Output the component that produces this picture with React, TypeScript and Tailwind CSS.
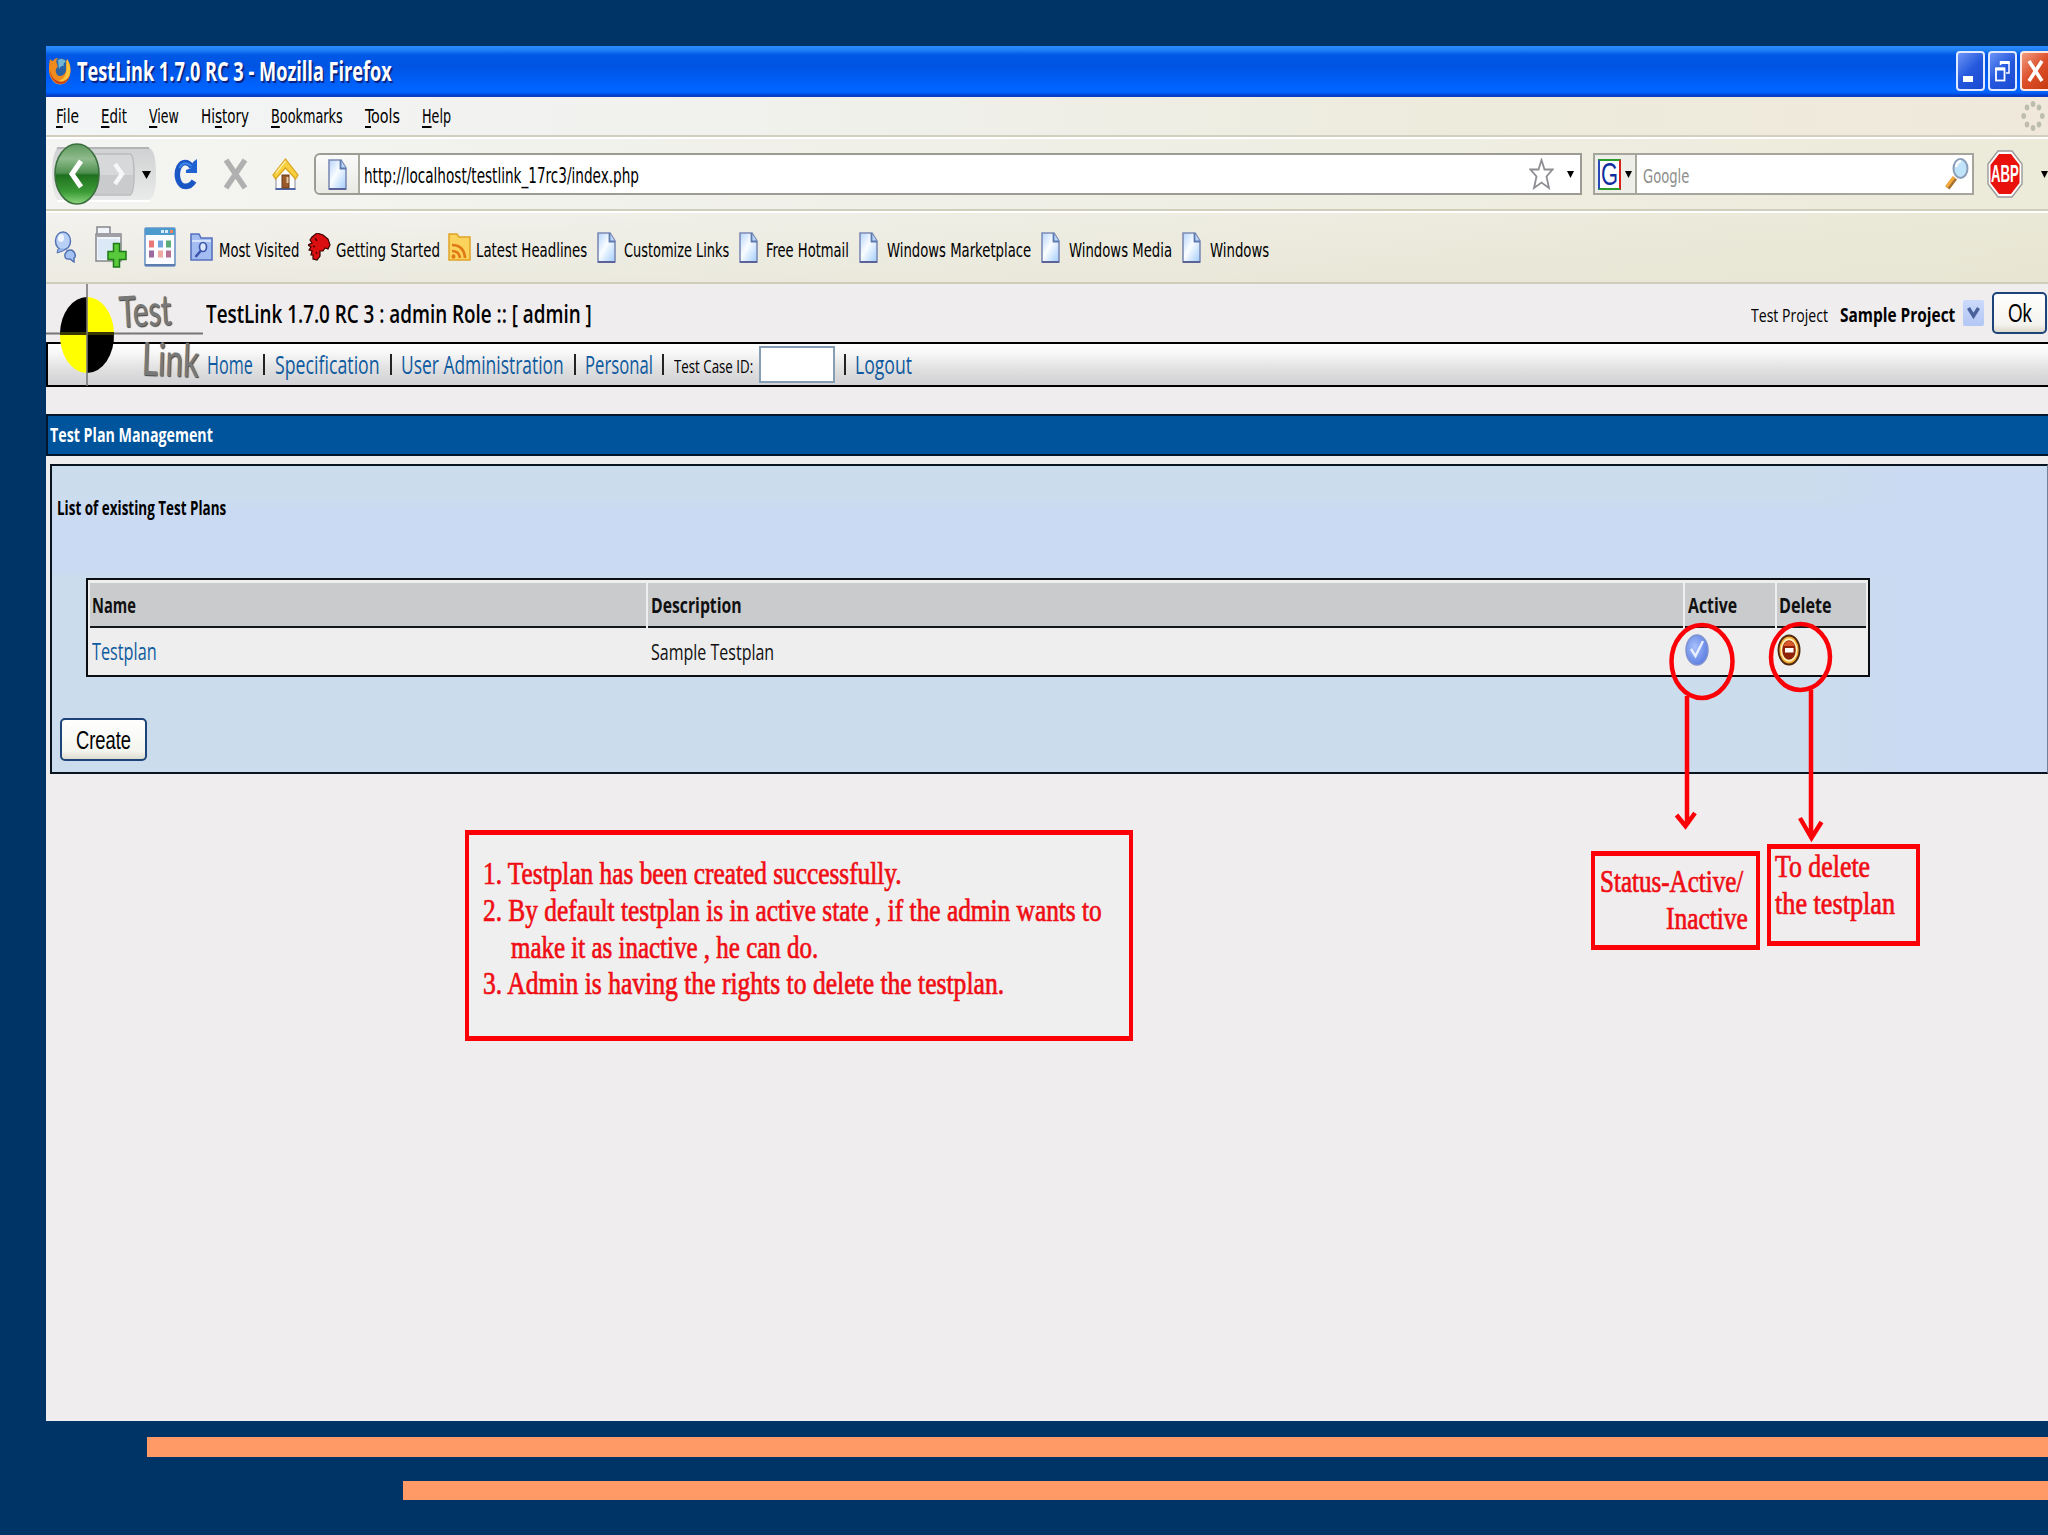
import { useLayoutEffect, useRef, useState } from "react";
import type { ReactNode } from "react";

type FitProps = { w: number; className?: string; children: ReactNode };

// One line of text squeezed or stretched to a fixed width
function Fit({ w, className = "", children }: FitProps) {
  const ref = useRef<HTMLSpanElement>(null);
  const [scale, setScale] = useState(1);

  useLayoutEffect(() => {
    const natural = ref.current?.offsetWidth;
    if (natural) setScale(w / natural);
  }, [w]);

  return (
    <span className={`block shrink-0 whitespace-pre ${className}`} style={{ width: w }}>
      <span ref={ref} className="block w-max origin-left" style={{ transform: `scaleX(${scale})` }}>
        {children}
      </span>
    </span>
  );
}

const UI = "font-['DejaVu_Sans_Condensed','DejaVu_Sans',sans-serif]";
const WEB = "font-['Open_Sans',sans-serif]";

const menu = [
  { pre: "", key: "F", post: "ile", w: 23 },
  { pre: "", key: "E", post: "dit", w: 26 },
  { pre: "", key: "V", post: "iew", w: 30 },
  { pre: "Hi", key: "s", post: "tory", w: 48 },
  { pre: "", key: "B", post: "ookmarks", w: 72 },
  { pre: "", key: "T", post: "ools", w: 35 },
  { pre: "", key: "H", post: "elp", w: 29 },
];

const pageLinks = [
  { label: "Customize Links", w: 105, gap: "ml-[8px]" },
  { label: "Free Hotmail", w: 83, gap: "ml-[8px]" },
  { label: "Windows Marketplace", w: 144, gap: "ml-[9px]" },
  { label: "Windows Media", w: 103, gap: "ml-[9px]" },
  { label: "Windows", w: 59, gap: "ml-[9px]" },
];

function FirefoxIcon() {
  return (
    <svg className="ml-[3px] h-[30px] w-[22px] shrink-0" viewBox="0 0 22 30" preserveAspectRatio="none">
      <ellipse cx="12" cy="14" rx="8.5" ry="12" fill="#2a62a8" />
      <path d="M9 4c3-2 7-1 8 2-2 0-3 2-2 4-2-1-4 1-5 3z" fill="#6fb6d8" />
      <path d="M1 3c1 1 2 2 3 2C6 2 8 2 9 2 7 4 7 6 8 8c1 2 1 3-1 5-1 3 1 7 4 7 4 0 7-4 6-10 0-3 0-5 1-7 5 6 5 17-1 23-5 4-12 2-15-4C-1 17 0 8 1 3z" fill="#f08a1c" />
      <path d="M18 3c5 7 4 19-2 24-5 3-11 1-13-4 6 4 12 1 14-6 1-5 0-9 1-14z" fill="#fbc23c" />
      <path d="M1 14c0 8 5 15 11 14 5 0 8-5 9-9-3 6-8 8-12 6-4-1-7-5-8-11z" fill="#c8401a" />
    </svg>
  );
}

function PageIcon({ className = "" }: { className?: string }) {
  return (
    <svg className={`h-[31px] w-[19px] shrink-0 ${className}`} viewBox="0 0 19 31">
      <defs>
        <linearGradient id="page" x1="0" y1="0" x2="1" y2="1">
          <stop offset="0" stopColor="#b4d3fb" />
          <stop offset="0.45" stopColor="#fafdff" />
          <stop offset="1" stopColor="#a0cbfb" />
        </linearGradient>
      </defs>
      <path d="M1 1H13L18 9V30H1Z" fill="url(#page)" stroke="#7d8bb5" strokeWidth="1.6" />
      <path d="M12.5 1V9.5H18" fill="#b9d6fb" stroke="#5d79ae" strokeWidth="1.8" />
      <path d="M1 30H18" stroke="#5a6298" strokeWidth="2" />
    </svg>
  );
}

function Caret({ className = "" }: { className?: string }) {
  return (
    <svg className={`h-[7px] w-[7px] shrink-0 ${className}`} viewBox="0 0 8 7" preserveAspectRatio="none">
      <path d="M0 0h8L4 7z" fill="#000" />
    </svg>
  );
}

function BackForward() {
  return (
    <svg className="ml-[5px] h-[64px] w-[108px] shrink-0" viewBox="0 0 108 64">
      <defs>
        <linearGradient id="green" x1="0" y1="0" x2="0" y2="1">
          <stop offset="0" stopColor="#5f9a5f" />
          <stop offset="0.25" stopColor="#8fbb8c" />
          <stop offset="0.48" stopColor="#4f9150" />
          <stop offset="0.52" stopColor="#1f701f" />
          <stop offset="0.8" stopColor="#3b9c36" />
          <stop offset="1" stopColor="#8fd67f" />
        </linearGradient>
        <linearGradient id="pill" x1="0" y1="0" x2="0" y2="1">
          <stop offset="0" stopColor="#cfd1d2" />
          <stop offset="1" stopColor="#e9ebeb" />
        </linearGradient>
      </defs>
      <path d="M6 6H98Q105 8 105 32T98 58H6Q1 50 1 32T6 6Z" fill="url(#pill)" />
      <path d="M6 6H98" stroke="#b3b4b5" strokeWidth="2" />
      <path d="M6 59H99" stroke="#fff" strokeWidth="2" />
      <path d="M44 12H79Q83 13 83 32T79 53H44Z" fill="#d6d8d9" stroke="#b9bbbd" strokeWidth="1.5" />
      <path d="M45 33H82Q82 52 79 52H45Z" fill="#c9cbcd" />
      <path d="M64 22L71 32L64 42" fill="none" stroke="#f7f7f7" strokeWidth="4.5" />
      <ellipse cx="26" cy="32" rx="22" ry="30" fill="url(#green)" stroke="#3b6f3e" strokeWidth="1.6" />
      <path d="M30 19L21 32L30 45" fill="none" stroke="#fff" strokeWidth="5" />
      <path d="M91 29h9l-4.5 8z" fill="#000" />
    </svg>
  );
}

function ReloadIcon() {
  return (
    <svg className="ml-[15px] h-[32px] w-[24px] shrink-0" viewBox="0 0 24 32">
      <path d="M18 9C14 3 8 3 5 9C2 15 3 25 9 28C13 29 17 28 20 23" fill="none" stroke="#1b57c4" strokeWidth="5.5" />
      <path d="M17.5 8C13 4 8 4 5.500 10" fill="none" stroke="#3f86ea" strokeWidth="2" />
      <path d="M23 1V15H12V12L17 10L19 4Z" fill="#1e62d2" />
    </svg>
  );
}

function HomeIcon() {
  return (
    <svg className="ml-[24px] h-[32px] w-[27px] shrink-0" viewBox="0 0 27 32">
      <path d="M4 14L13.5 5L23 14V31H4Z" fill="#fbfcfd" stroke="#9c9da8" strokeWidth="1.2" />
      <path d="M3.5 31H23.5" stroke="#5064a8" strokeWidth="2" />
      <rect x="10" y="17" width="7" height="13" fill="#9a5a2c" stroke="#6d3c18" />
      <rect x="14.5" y="19" width="2" height="6" fill="#e6c8a0" />
      <path d="M13.5 1L26 17L23.5 21L13.5 10L3.500 21L1 17Z" fill="#f8cf3d" stroke="#d9a21c" strokeWidth="1.2" />
      <path d="M13.5 3L4 15" stroke="#fdeb9a" strokeWidth="1.5" />
    </svg>
  );
}

function Magnifier() {
  return (
    <svg className="mr-[3px] ml-auto h-[32px] w-[24px]" viewBox="0 0 24 32">
      <path d="M10 20L2.5 30" stroke="#a8702c" strokeWidth="5" />
      <path d="M9 19L1.5 29" stroke="#f2a83a" strokeWidth="3" />
      <ellipse cx="15.5" cy="10.5" rx="7" ry="9.5" fill="#bfe3f8" stroke="#8a9eb8" strokeWidth="2" />
      <path d="M11 9Q12 3.500 16 3" fill="none" stroke="#fff" strokeWidth="2.5" />
    </svg>
  );
}

function AdblockIcon() {
  return (
    <div className="relative ml-[13px] h-[48px] w-[36px] shrink-0">
      <svg className="h-[48px] w-[36px]" viewBox="0 0 36 48">
        <path d="M11 1H25L35 14V34L25 47H11L1 34V14Z" fill="#fff" stroke="#9b9b9b" strokeWidth="1.4" />
        <path d="M12 4H24L32.5 15V33L24 44H12L3.500 33V15Z" fill="#e8110c" />
      </svg>
      <Fit w={28} className="absolute top-[9px] left-[4px] font-['Liberation_Sans',sans-serif] text-[24px] leading-[30px] font-bold text-white">
        ABP
      </Fit>
    </div>
  );
}

function TitleBar() {
  return (
    <div className="flex h-[51px] items-center border-b-2 border-[#0a3fc4] bg-[linear-gradient(180deg,#2b8cff_0px,#2080f5_4px,#0058e6_9px,#0054e3_20px,#0061fb_38px,#0066ff_46px,#0045d8_49px)]">
      <FirefoxIcon />
      <Fit w={315} className={`ml-[6px] ${WEB} text-[26px] leading-[30px] font-bold text-white [text-shadow:2px_2px_1px_#0a1f7a]`}>
        TestLink 1.7.0 RC 3 - Mozilla Firefox
      </Fit>
      <div className="ml-auto flex shrink-0 gap-[3px]">
        <div className="flex h-[40px] w-[29px] items-end rounded-[4px] border-2 border-[#dfe9ff] bg-[linear-gradient(135deg,#6d94f6,#2458dd_50%,#1c4ad0)] pb-[7px] pl-[5px]">
          <div className="h-[6px] w-[10px] bg-white" />
        </div>
        <div className="flex h-[40px] w-[29px] items-center justify-center rounded-[4px] border-2 border-[#dfe9ff] bg-[linear-gradient(135deg,#6d94f6,#2458dd_50%,#1c4ad0)]">
          <svg className="h-[22px] w-[15px]" viewBox="0 0 15 22">
            <path d="M5.5 5V2H14V13H11" fill="none" stroke="#fff" strokeWidth="1.5" />
            <path d="M5 2.500H14.5" stroke="#fff" strokeWidth="3" />
            <rect x="1" y="8.5" width="8.5" height="12" fill="none" stroke="#fff" strokeWidth="1.8" />
            <path d="M0.5 9H10" stroke="#fff" strokeWidth="3" />
          </svg>
        </div>
        <div className="flex h-[40px] w-[28px] items-center justify-center rounded-l-[4px] border-2 border-r-0 border-[#ffe6df] bg-[linear-gradient(135deg,#f19a80,#dc4f2a_50%,#c63a12)]">
          <svg className="h-[24px] w-[17px]" viewBox="0 0 17 24">
            <path d="M2 2L15 22M15 2L2 22" stroke="#fff" strokeWidth="3.6" />
          </svg>
        </div>
      </div>
    </div>
  );
}

function MenuBar() {
  return (
    <div className="flex h-[40px] items-center gap-[22px] border-b-2 border-[#d2cfbf] bg-[linear-gradient(90deg,#f3f5f6,#f0f0ea_45%,#ecebdc_70%,#f0e9db)] pl-[10px]">
      {menu.map((m) => (
        <Fit key={m.key + m.post} w={m.w} className={`${UI} text-[20px] leading-[30px] text-black`}>
          {m.pre}
          <span className="underline decoration-[2px] underline-offset-[3px] [text-decoration-skip-ink:none]">{m.key}</span>
          {m.post}
        </Fit>
      ))}
      <svg className="mr-[3px] ml-auto h-[32px] w-[24px]" viewBox="0 0 24 32">
        <g fill="#bcbdae">
          <ellipse cx="12" cy="4" rx="2.3" ry="3" />
          <ellipse cx="18" cy="7.5" rx="2.3" ry="3" />
          <ellipse cx="21.3" cy="16" rx="2.3" ry="3" />
          <ellipse cx="18" cy="24.5" rx="2.3" ry="3" />
          <ellipse cx="12" cy="28" rx="2.3" ry="3" />
          <ellipse cx="6" cy="24.5" rx="2.3" ry="3" />
          <ellipse cx="2.7" cy="16" rx="2.3" ry="3" />
          <ellipse cx="6" cy="7.5" rx="2.3" ry="3" />
        </g>
      </svg>
    </div>
  );
}

function NavBar() {
  return (
    <div className="flex h-[74px] items-center border-t-2 border-b-2 border-t-white border-b-[#d0cdbb] bg-[linear-gradient(90deg,#f4f4f2,#f0f0e8_45%,#ecead9)]">
      <BackForward />
      <ReloadIcon />
      <svg className="ml-[25px] h-[32px] w-[25px] shrink-0" viewBox="0 0 25 32">
        <path d="M3 2L22 30M22 2L3 30" stroke="#b0b0b0" strokeWidth="5.5" />
      </svg>
      <HomeIcon />
      <div className="ml-[15px] flex h-[42px] w-[1268px] shrink-0 items-center rounded-l-[6px] border-2 border-[#9c9c94] bg-white">
        <div className="flex h-full w-[44px] shrink-0 items-center rounded-l-[5px] border-r-2 border-[#a9a9a0] bg-[linear-gradient(180deg,#fafafa,#e9e9e4)] pl-[12px]">
          <PageIcon />
        </div>
        <Fit w={275} className={`ml-[4px] pt-[3px] ${UI} text-[21px] leading-[30px] text-black`}>
          http://localhost/testlink_17rc3/index.php
        </Fit>
        <svg className="ml-auto h-[32px] w-[25px]" viewBox="0 0 25 32">
          <path d="M12.5 2L15.5 11.500H23.5L17.5 18.500L20 30L12.5 24.500L5 30L7.500 18.500L1.500 11.500H9.500Z" fill="#fff" stroke="#8e8e94" strokeWidth="1.8" />
        </svg>
        <Caret className="mr-[6px] ml-[13px]" />
      </div>
      <div className="ml-[11px] flex h-[42px] w-[381px] shrink-0 items-center border-2 border-[#a5a59c] bg-white">
        <div className="flex h-full w-[42px] shrink-0 items-center border-r-2 border-[#a9a9a0] bg-[#eeeee8] pl-[3px]">
          <div className="h-[31px] w-[23px] border-2 border-t-[#2c9c2c] border-r-[#d8231c] border-b-[#2c9c2c] border-l-[#2848b8] bg-white">
            <Fit w={17} className="ml-px font-['Liberation_Sans',sans-serif] text-[31px] leading-[28px] text-[#122f9e]">G</Fit>
          </div>
          <Caret className="ml-[4px]" />
        </div>
        <Fit w={46} className={`ml-[6px] pt-[3px] ${UI} text-[20px] leading-[30px] text-[#8d8d8a]`}>Google</Fit>
        <Magnifier />
      </div>
      <AdblockIcon />
      <Caret className="ml-auto" />
    </div>
  );
}

function BookmarksBar() {
  return (
    <div className="flex h-[73px] items-center border-t-2 border-b-2 border-t-white border-b-[#cfccb9] bg-[linear-gradient(180deg,#f3f2ea00,#e2e0cc66),linear-gradient(90deg,#f3f2ef,#efeee5_45%,#eae8d6)] pb-px pl-[8px]">
      <svg className="h-[32px] w-[23px] shrink-0" viewBox="0 0 23 32">
        <ellipse cx="9" cy="10" rx="7.5" ry="9" fill="#b8d0f6" stroke="#5573b4" strokeWidth="1.5" />
        <ellipse cx="7" cy="7" rx="3" ry="4" fill="#eef5ff" />
        <path d="M4 18L3 22L9 20L13 17" fill="#8fb0e6" stroke="#5573b4" />
        <path d="M13 20Q19 17 21 23Q22 26 20 27V31L16 28Q10 29 11 23Z" fill="#a4c3f3" stroke="#4e6db0" strokeWidth="1.4" />
      </svg>
      <svg className="ml-[18px] h-[42px] w-[32px] shrink-0" viewBox="0 0 32 42">
        <path d="M2 8V1H15V8H26V35H1V8Z" fill="#f0f5fa" stroke="#85878c" strokeWidth="1.5" />
        <path d="M2 9H26" stroke="#a0a0a4" strokeWidth="4" />
        <rect x="3" y="13" width="21" height="20" fill="#dbe9f7" />
        <path d="M18.5 17.500H24.5V25.500H31V33.500H24.5V41H18.5V33.500H13V25.500H18.5Z" fill="#58c93a" stroke="#1d7a16" strokeWidth="1.5" />
      </svg>
      <svg className="ml-[17px] h-[40px] w-[32px] shrink-0" viewBox="0 0 32 40">
        <rect x="1" y="1" width="30" height="38" rx="1" fill="#fbfcff" stroke="#6d95c8" strokeWidth="1.6" />
        <rect x="1" y="1" width="30" height="7" fill="#4d9ace" />
        <path d="M17 4.500h3M21 4.500h3" stroke="#d7ebfa" strokeWidth="3" />
        <path d="M26 4.500h3" stroke="#f0825a" strokeWidth="3" />
        <path d="M5 17h5" stroke="#e87878" strokeWidth="7" />
        <path d="M14 17h5" stroke="#74a3dc" strokeWidth="7" />
        <path d="M22 17h5" stroke="#5cab78" strokeWidth="7" />
        <path d="M5 27h5" stroke="#9a6a9e" strokeWidth="7" />
        <path d="M14 27h5" stroke="#eeaaa0" strokeWidth="7" />
        <path d="M22 27h5" stroke="#b57092" strokeWidth="7" />
        <path d="M1 38h30" stroke="#5c7cae" strokeWidth="2" />
      </svg>
      <svg className="ml-[14px] h-[28px] w-[23px] shrink-0" viewBox="0 0 23 28">
        <path d="M1 27V1H9L11 5H22V27Z" fill="#a3bdf2" stroke="#5871c0" strokeWidth="1.6" />
        <path d="M2 8H21" stroke="#d5e2fc" strokeWidth="2" />
        <ellipse cx="13" cy="14" rx="3.5" ry="4.5" fill="#dbe8ff" stroke="#3c55ab" strokeWidth="1.7" />
        <path d="M10.5 18L5.500 24" stroke="#3c55ab" strokeWidth="2.5" />
      </svg>
      <Fit w={80} className={`ml-[6px] pt-[5px] ${UI} text-[20px] leading-[30px] text-black`}>Most Visited</Fit>
      <svg className="ml-[9px] h-[28px] w-[23px] shrink-0" viewBox="0 0 23 28">
        <path d="M4 4L9 0L15 2L20 6L22 12L20 16L17 15L15 18L12 18L12 23L9 27L5 26L5 22L3 22L4 18L1 17L3 14L0 12L4 10L2 7Z" fill="#dc0f10" stroke="#3a0000" strokeWidth="1.2" />
        <path d="M7 5L9 8M5 13L7 14M8 19L9 21" stroke="#5a0000" strokeWidth="1.5" />
      </svg>
      <Fit w={104} className={`ml-[5px] pt-[5px] ${UI} text-[20px] leading-[30px] text-black`}>Getting Started</Fit>
      <svg className="ml-[8px] h-[28px] w-[23px] shrink-0" viewBox="0 0 23 28">
        <path d="M1 27V1H9L11 4H22V27Z" fill="#fbd25c" stroke="#e0a326" strokeWidth="1.5" />
        <path d="M4 12Q16 12 17 25M4 18Q11 18 12 25" fill="none" stroke="#e07a14" strokeWidth="2.6" />
        <ellipse cx="5.5" cy="23.5" rx="2" ry="2.3" fill="#e07a14" />
      </svg>
      <Fit w={111} className={`mr-[2px] ml-[5px] pt-[5px] ${UI} text-[20px] leading-[30px] text-black`}>Latest Headlines</Fit>
      {pageLinks.map((l) => (
        <div key={l.label} className="ml-[8px] flex shrink-0 items-center pr-[2px]">
          <PageIcon />
          <Fit w={l.w} className={`${l.gap} pt-[5px] ${UI} text-[20px] leading-[30px] text-black`}>{l.label}</Fit>
        </div>
      ))}
    </div>
  );
}

function Logo() {
  const word = "font-['Lato',sans-serif] leading-[48px] font-medium text-[#787878] [text-shadow:1px_1px_1px_#444]";
  return (
    <div className="absolute top-0 left-0 h-[103px] w-[162px]">
      <svg className="h-[103px] w-[162px]" viewBox="0 0 162 103">
        <path d="M41 49V13A27 37.500 0 0 0 14 49Z" fill="#000" />
        <path d="M41 49V13A27 37.500 0 0 1 68 49Z" fill="#ff0" />
        <path d="M41 49V89A27 38 0 0 1 14 49Z" fill="#ff0" />
        <path d="M41 49V89A27 38 0 0 0 68 49Z" fill="#000" />
        <path d="M0 49.500H157" stroke="#777" strokeWidth="2" />
        <path d="M14 49.500H68" stroke="#3a3700" strokeWidth="3" />
        <path d="M41 0V102" stroke="#777" strokeWidth="1.6" />
      </svg>
      <div className="absolute top-[2px] left-[73px] rotate-[-3deg]">
        <Fit w={52} className={`${word} text-[43px]`}>Test</Fit>
      </div>
      <div className="absolute top-[51px] left-[96px] rotate-[2deg]">
        <Fit w={57} className={`${word} text-[46px]`}>Link</Fit>
      </div>
    </div>
  );
}

function Bar() {
  return <div className="h-[21px] w-[2px] shrink-0 bg-[#222]" />;
}

function PageHeader() {
  const link = `${WEB} pb-[2px] text-[25px] leading-[34px] text-[#0f5a9e]`;
  return (
    <div className="relative">
      <div className="flex h-[58px] items-center pl-[160px]">
        <Fit w={386} className={`pb-px ${WEB} text-[26px] leading-[34px] font-semibold text-black`}>
          TestLink 1.7.0 RC 3 : admin Role :: [ admin ]
        </Fit>
        <Fit w={77} className={`ml-auto pt-[4px] ${WEB} text-[19px] leading-[30px] text-black`}>Test Project</Fit>
        <Fit w={115} className={`ml-[12px] pt-[4px] ${WEB} text-[20px] leading-[30px] font-bold text-black`}>Sample Project</Fit>
        <div className="ml-[8px] flex h-[26px] w-[21px] shrink-0 items-center justify-center rounded-[2px] bg-[linear-gradient(180deg,#cbd9fb,#b3c7f5)]">
          <svg className="h-[12px] w-[13px]" viewBox="0 0 13 12">
            <path d="M1.500 1L6.500 9L11.5 1" fill="none" stroke="#4a629c" strokeWidth="3.4" />
          </svg>
        </div>
        <button className="mr-px ml-[8px] flex h-[42px] w-[55px] shrink-0 items-center justify-center rounded-[5px] border-2 border-[#1c4478] bg-[linear-gradient(180deg,#fff,#f4f3ee_80%,#dcd8cc)]">
          <Fit w={24} className="pb-px font-['Liberation_Sans',sans-serif] text-[25px] leading-[30px] text-black">Ok</Fit>
        </button>
      </div>
      <div className="flex h-[45px] items-center border-2 border-r-0 border-black bg-[linear-gradient(180deg,#fff,#f6f6f7_25%,#dededf_65%,#d2d2d6)] pl-[159px]">
        <Fit w={46} className={link}>Home</Fit>
        <div className="w-[10px]" />
        <Bar />
        <Fit w={105} className={`ml-[10px] ${link}`}>Specification</Fit>
        <div className="w-[10px]" />
        <Bar />
        <Fit w={163} className={`ml-[9px] ${link}`}>User Administration</Fit>
        <div className="w-[10px]" />
        <Bar />
        <Fit w={68} className={`ml-[9px] ${link}`}>Personal</Fit>
        <div className="w-[9px]" />
        <Bar />
        <Fit w={79} className={`ml-[10px] pt-[2px] ${WEB} text-[19px] leading-[30px] text-black`}>Test Case ID:</Fit>
        <div className="ml-[6px] h-[37px] w-[76px] shrink-0 border-2 border-[#869eb4] bg-white" />
        <div className="w-[9px]" />
        <Bar />
        <Fit w={57} className={`ml-[9px] ${link}`}>Logout</Fit>
      </div>
      <Logo />
    </div>
  );
}

function PlanTable() {
  const head = `${WEB} text-[22px] leading-[42px] font-bold text-[#111]`;
  const cell = "border-b-2 border-[#15181a] bg-[#cacbcd]";
  return (
    <div className="ml-[34px] w-[1784px] border-2 border-[#0a0e12] bg-[#eeeeee] px-[2px] pt-[3px]">
      <div className="grid h-[45px] grid-cols-[556px_1035px_90px_89px] gap-x-[2px]">
        <div className={`${cell} pl-[2px]`}>
          <Fit w={44} className={head}>Name</Fit>
        </div>
        <div className={`${cell} pl-[3px]`}>
          <Fit w={91} className={head}>Description</Fit>
        </div>
        <div className={`${cell} pl-[3px]`}>
          <Fit w={49} className={head}>Active</Fit>
        </div>
        <div className={`${cell} pl-[2px]`}>
          <Fit w={53} className={head}>Delete</Fit>
        </div>
      </div>
      <div className="grid h-[47px] grid-cols-[556px_1035px_90px_89px] gap-x-[2px]">
        <Fit w={65} className={`pl-[2px] ${WEB} text-[23px] leading-[46px] text-[#0f5a9e]`}>Testplan</Fit>
        <Fit w={123} className={`pl-[3px] ${WEB} text-[22px] leading-[46px] text-[#111]`}>Sample Testplan</Fit>
        <svg className="mt-[6px] h-[32px] w-[24px]" viewBox="0 0 24 32">
          <defs>
            <radialGradient id="ball" cx="0.4" cy="0.4" r="0.7">
              <stop offset="0" stopColor="#a8c0fb" />
              <stop offset="1" stopColor="#5478e0" />
            </radialGradient>
          </defs>
          <ellipse cx="12" cy="16" rx="11" ry="15" fill="url(#ball)" stroke="#7f93cf" strokeWidth="1.5" />
          <path d="M6 15L10.5 22L18 7" fill="none" stroke="#e8f0ff" strokeWidth="2.4" />
        </svg>
        <svg className="mt-[6px] h-[32px] w-[24px]" viewBox="0 0 24 32">
          <ellipse cx="12" cy="16" rx="11.5" ry="15.5" fill="#4f260e" />
          <ellipse cx="12" cy="16" rx="9.7" ry="13.5" fill="#f0a830" />
          <ellipse cx="12" cy="16" rx="8.4" ry="11.8" fill="#fff0b8" />
          <ellipse cx="12" cy="16" rx="6.8" ry="9.8" fill="#8f2208" />
          <path d="M6.5 12Q8 7 12 7T17.5 12Z" fill="#d9592a" />
          <rect x="8" y="14" width="8.5" height="4.5" fill="#fff" />
        </svg>
      </div>
    </div>
  );
}

function Annotations() {
  const note = "font-['Liberation_Serif',serif] text-[31px] leading-[37px] text-[#f00d14] [-webkit-text-stroke:0.7px_#f00d14]";
  return (
    <>
      <svg className="absolute top-0 left-0 h-[1535px] w-[2048px]" viewBox="0 0 2048 1535">
        <g fill="none" stroke="#fb0007" strokeWidth="4.5">
          <ellipse cx="1702" cy="661.5" rx="30.5" ry="36.5" />
          <ellipse cx="1800.5" cy="657" rx="29.5" ry="33" />
          <path d="M1687 696V824M1676.5 815L1685.5 826L1695 813" />
          <path d="M1811 690V838M1800 818L1811.5 838L1821.5 822" />
        </g>
      </svg>
      <div className="absolute top-[830px] left-[465px] h-[211px] w-[668px] border-x-4 border-y-[5px] border-[#fb0007] bg-[#eeefee] pt-[20px] pl-[14px]">
        <Fit w={419} className={note}>1. Testplan has been created successfully.</Fit>
        <Fit w={619} className={note}>2. By default testplan is in active state , if the admin wants to</Fit>
        <Fit w={307} className={`ml-[28px] ${note}`}>make it as inactive , he can do.</Fit>
        <Fit w={521} className={`-mt-px ${note}`}>3. Admin is having the rights to delete the testplan.</Fit>
      </div>
      <div className="absolute top-[851px] left-[1591px] h-[99px] w-[169px] border-x-4 border-y-[5px] border-[#fb0007] pt-[7px] pl-[5px]">
        <Fit w={143} className={note}>Status-Active/</Fit>
        <Fit w={82} className={`ml-[66px] ${note}`}>Inactive</Fit>
      </div>
      <div className="absolute top-[844px] left-[1767px] h-[102px] w-[153px] border-x-4 border-y-[5px] border-[#fb0007] pl-[4px]">
        <Fit w={95} className={`-mt-px ${note}`}>To delete</Fit>
        <Fit w={120} className={note}>the testplan</Fit>
      </div>
    </>
  );
}

export default function App() {
  return (
    <div className="relative h-[1535px] w-[2048px] overflow-hidden bg-[#003366] pt-[46px]">
      <div className="ml-[46px] h-[1375px] w-[2002px] bg-[#efedee]">
        <TitleBar />
        <MenuBar />
        <NavBar />
        <BookmarksBar />
        <PageHeader />
        <div className="mt-[27px] h-[42px] border-2 border-r-0 border-[#04162c] bg-[#00549c] pl-[2px]">
          <Fit w={163} className={`${WEB} text-[20px] leading-[38px] font-bold text-white`}>Test Plan Management</Fit>
        </div>
        <div className="mt-[8px] ml-[4px] h-[310px] w-[1998px] border-2 border-r border-[#0a1420] border-r-[#6f8299] bg-[linear-gradient(90deg,#cadaf200_1750px,#cadaf2_1850px),linear-gradient(180deg,#cbdded_0px,#cbdded_30px,#cadaf2_44px,#cadaf2_105px,#cbdded_112px)]">
          <Fit w={169} className={`mt-[26px] ml-[5px] ${WEB} text-[20px] leading-[32px] font-bold text-black`}>List of existing Test Plans</Fit>
          <div className="h-[54px]" />
          <PlanTable />
          <button className="mt-[41px] ml-[8px] flex h-[43px] w-[87px] items-center justify-center rounded-[5px] border-2 border-[#1c4478] bg-[linear-gradient(180deg,#fff,#f4f4ee_80%,#dcdccf)]">
            <Fit w={55} className="pt-px font-['Liberation_Sans',sans-serif] text-[26px] leading-[30px] text-black">Create</Fit>
          </button>
        </div>
      </div>
      <div className="mt-[16px] ml-[147px] h-[20px] bg-[#ff9966]" />
      <div className="mt-[24px] ml-[403px] h-[19px] bg-[#ff9966]" />
      <Annotations />
    </div>
  );
}
